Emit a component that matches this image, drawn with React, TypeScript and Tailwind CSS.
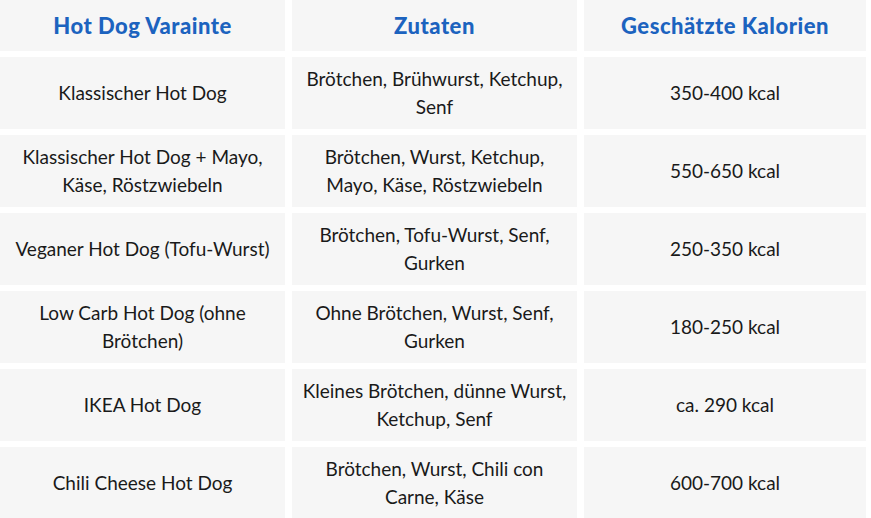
const rows: [string, string, string][] = [
  ["Klassischer Hot Dog", "Brötchen, Brühwurst, Ketchup, Senf", "350-400 kcal"],
  ["Klassischer Hot Dog + Mayo, Käse, Röstzwiebeln", "Brötchen, Wurst, Ketchup, Mayo, Käse, Röstzwiebeln", "550-650 kcal"],
  ["Veganer Hot Dog (Tofu-Wurst)", "Brötchen, Tofu-Wurst, Senf, Gurken", "250-350 kcal"],
  ["Low Carb Hot Dog (ohne Brötchen)", "Ohne Brötchen, Wurst, Senf, Gurken", "180-250 kcal"],
  ["IKEA Hot Dog", "Kleines Brötchen, dünne Wurst, Ketchup, Senf", "ca. 290 kcal"],
  ["Chili Cheese Hot Dog", "Brötchen, Wurst, Chili con Carne, Käse", "600-700 kcal"],
];

const headers = ["Hot Dog Varainte", "Zutaten", "Geschätzte Kalorien"];

export default function App() {
  return (
    <div className="w-[871px] h-[518px] overflow-hidden bg-white font-['Lato',sans-serif]">
      <div className="grid grid-cols-[285px_285px_282px] gap-x-[7px] gap-y-[6px] auto-rows-[72px] grid-rows-[51px]">
        {headers.map((h) => (
          <div
            key={h}
            className="bg-[#f6f6f6] flex items-center justify-center text-[22px] font-black text-[#1c63bf] tracking-[0.5px]"
          >
            {h}
          </div>
        ))}
        {rows.map((r, i) =>
          r.map((c, j) => (
            <div
              key={`${i}-${j}`}
              className="bg-[#f6f6f6] flex items-center justify-center text-center px-2 text-[19px] leading-[28px] text-[#1a1a1a]"
            >
              {c}
            </div>
          ))
        )}
      </div>
    </div>
  );
}
